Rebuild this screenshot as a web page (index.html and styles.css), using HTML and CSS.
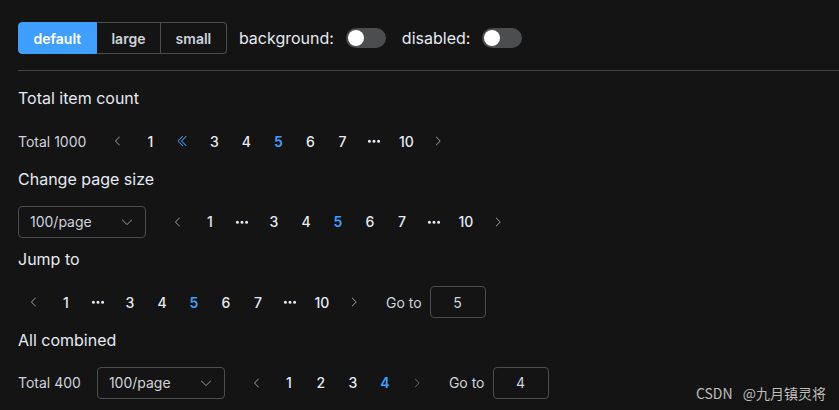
FILE: index.html
```html
<!DOCTYPE html>
<html lang="en">
<head>
<meta charset="utf-8">
<title>Pagination</title>
<link rel="stylesheet" href="styles.css">
</head>
<body>
<div class="page">
  <div class="toolbar">
    <div class="radio-group">
      <span class="radio-btn is-active">default</span>
      <span class="radio-btn">large</span>
      <span class="radio-btn">small</span>
    </div>
    <span class="label">background:</span>
    <span class="switch"><span class="knob"></span></span>
    <span class="label label-gap">disabled:</span>
    <span class="switch"><span class="knob"></span></span>
  </div>
  <div class="divider"></div>

  <div class="block">
    <div class="title">Total item count</div>
    <div class="pagination">
      <span class="total">Total 1000</span>
      <span class="btn"><svg class="ico-arrow" viewBox="0 0 1024 1024"><path fill="currentColor" d="M609.408 149.376 277.76 489.6a32 32 0 0 0 0 44.672l331.648 340.352a29.12 29.12 0 0 0 41.728 0 30.592 30.592 0 0 0 0-42.752L339.264 511.936l311.872-319.872a30.592 30.592 0 0 0 0-42.688 29.12 29.12 0 0 0-41.728 0z"/></svg></span>
      <span class="pg">1</span>
      <span class="pg more is-hover"><svg class="ico-darrow" viewBox="0 0 1024 1024"><path fill="currentColor" d="M529.408 149.376a29.12 29.12 0 0 1 41.728 0 30.592 30.592 0 0 1 0 42.688L259.264 511.936l311.872 319.936a30.592 30.592 0 0 1-.512 43.264 29.12 29.12 0 0 1-41.216-.512L197.76 534.272a32 32 0 0 1 0-44.672l331.648-340.224zm256 0a29.12 29.12 0 0 1 41.728 0 30.592 30.592 0 0 1 0 42.688L515.264 511.936l311.872 319.936a30.592 30.592 0 0 1-.512 43.264 29.120 29.12 0 0 1-41.216-.512L453.760 534.272a32 32 0 0 1 0-44.672l331.648-340.224z"/></svg></span>
      <span class="pg">3</span>
      <span class="pg">4</span>
      <span class="pg is-active">5</span>
      <span class="pg">6</span>
      <span class="pg">7</span>
      <span class="pg more"><svg class="ico-more" viewBox="0 0 1024 1024"><path fill="currentColor" d="M176 416a112 112 0 1 1 0 224 112 112 0 0 1 0-224zm336 0a112 112 0 1 1 0 224 112 112 0 0 1 0-224zm336 0a112 112 0 1 1 0 224 112 112 0 0 1 0-224z"/></svg></span>
      <span class="pg">10</span>
      <span class="btn"><svg class="ico-arrow" viewBox="0 0 1024 1024"><path fill="currentColor" d="M340.864 149.312a30.592 30.592 0 0 0 0 42.752L652.736 512 340.864 831.872a30.592 30.592 0 0 0 0 42.752 29.12 29.12 0 0 0 41.728 0L714.24 534.336a32 32 0 0 0 0-44.672L382.592 149.376a29.12 29.12 0 0 0-41.728 0z"/></svg></span>
    </div>
  </div>

  <div class="block">
    <div class="title">Change page size</div>
    <div class="pagination">
      <span class="select">100/page<svg class="ico-down" viewBox="0 0 1024 1024"><path fill="currentColor" d="M831.872 340.864 512 652.672 192.128 340.864a30.592 30.592 0 0 0-42.752 0 29.12 29.12 0 0 0 0 41.6L489.664 714.24a32 32 0 0 0 44.672 0l340.288-331.712a29.12 29.12 0 0 0 0-41.728 30.592 30.592 0 0 0-42.752 0z"/></svg></span>
      <span class="btn"><svg class="ico-arrow" viewBox="0 0 1024 1024"><path fill="currentColor" d="M609.408 149.376 277.76 489.6a32 32 0 0 0 0 44.672l331.648 340.352a29.12 29.12 0 0 0 41.728 0 30.592 30.592 0 0 0 0-42.752L339.264 511.936l311.872-319.872a30.592 30.592 0 0 0 0-42.688 29.12 29.12 0 0 0-41.728 0z"/></svg></span>
      <span class="pg">1</span>
      <span class="pg more"><svg class="ico-more" viewBox="0 0 1024 1024"><path fill="currentColor" d="M176 416a112 112 0 1 1 0 224 112 112 0 0 1 0-224zm336 0a112 112 0 1 1 0 224 112 112 0 0 1 0-224zm336 0a112 112 0 1 1 0 224 112 112 0 0 1 0-224z"/></svg></span>
      <span class="pg">3</span>
      <span class="pg">4</span>
      <span class="pg is-active">5</span>
      <span class="pg">6</span>
      <span class="pg">7</span>
      <span class="pg more"><svg class="ico-more" viewBox="0 0 1024 1024"><path fill="currentColor" d="M176 416a112 112 0 1 1 0 224 112 112 0 0 1 0-224zm336 0a112 112 0 1 1 0 224 112 112 0 0 1 0-224zm336 0a112 112 0 1 1 0 224 112 112 0 0 1 0-224z"/></svg></span>
      <span class="pg">10</span>
      <span class="btn"><svg class="ico-arrow" viewBox="0 0 1024 1024"><path fill="currentColor" d="M340.864 149.312a30.592 30.592 0 0 0 0 42.752L652.736 512 340.864 831.872a30.592 30.592 0 0 0 0 42.752 29.12 29.12 0 0 0 41.728 0L714.24 534.336a32 32 0 0 0 0-44.672L382.592 149.376a29.12 29.12 0 0 0-41.728 0z"/></svg></span>
    </div>
  </div>

  <div class="block">
    <div class="title">Jump to</div>
    <div class="pagination">
      <span class="btn"><svg class="ico-arrow" viewBox="0 0 1024 1024"><path fill="currentColor" d="M609.408 149.376 277.76 489.6a32 32 0 0 0 0 44.672l331.648 340.352a29.12 29.12 0 0 0 41.728 0 30.592 30.592 0 0 0 0-42.752L339.264 511.936l311.872-319.872a30.592 30.592 0 0 0 0-42.688 29.12 29.12 0 0 0-41.728 0z"/></svg></span>
      <span class="pg">1</span>
      <span class="pg more"><svg class="ico-more" viewBox="0 0 1024 1024"><path fill="currentColor" d="M176 416a112 112 0 1 1 0 224 112 112 0 0 1 0-224zm336 0a112 112 0 1 1 0 224 112 112 0 0 1 0-224zm336 0a112 112 0 1 1 0 224 112 112 0 0 1 0-224z"/></svg></span>
      <span class="pg">3</span>
      <span class="pg">4</span>
      <span class="pg is-active">5</span>
      <span class="pg">6</span>
      <span class="pg">7</span>
      <span class="pg more"><svg class="ico-more" viewBox="0 0 1024 1024"><path fill="currentColor" d="M176 416a112 112 0 1 1 0 224 112 112 0 0 1 0-224zm336 0a112 112 0 1 1 0 224 112 112 0 0 1 0-224zm336 0a112 112 0 1 1 0 224 112 112 0 0 1 0-224z"/></svg></span>
      <span class="pg">10</span>
      <span class="btn"><svg class="ico-arrow" viewBox="0 0 1024 1024"><path fill="currentColor" d="M340.864 149.312a30.592 30.592 0 0 0 0 42.752L652.736 512 340.864 831.872a30.592 30.592 0 0 0 0 42.752 29.12 29.12 0 0 0 41.728 0L714.24 534.336a32 32 0 0 0 0-44.672L382.592 149.376a29.12 29.12 0 0 0-41.728 0z"/></svg></span>
      <span class="jumper">Go to<span class="jump-input">5</span></span>
    </div>
  </div>

  <div class="block">
    <div class="title">All combined</div>
    <div class="pagination">
      <span class="total">Total 400</span>
      <span class="select">100/page<svg class="ico-down" viewBox="0 0 1024 1024"><path fill="currentColor" d="M831.872 340.864 512 652.672 192.128 340.864a30.592 30.592 0 0 0-42.752 0 29.12 29.12 0 0 0 0 41.6L489.664 714.24a32 32 0 0 0 44.672 0l340.288-331.712a29.12 29.12 0 0 0 0-41.728 30.592 30.592 0 0 0-42.752 0z"/></svg></span>
      <span class="btn"><svg class="ico-arrow" viewBox="0 0 1024 1024"><path fill="currentColor" d="M609.408 149.376 277.76 489.6a32 32 0 0 0 0 44.672l331.648 340.352a29.12 29.12 0 0 0 41.728 0 30.592 30.592 0 0 0 0-42.752L339.264 511.936l311.872-319.872a30.592 30.592 0 0 0 0-42.688 29.12 29.12 0 0 0-41.728 0z"/></svg></span>
      <span class="pg">1</span>
      <span class="pg">2</span>
      <span class="pg">3</span>
      <span class="pg is-active">4</span>
      <span class="btn is-disabled"><svg class="ico-arrow" viewBox="0 0 1024 1024"><path fill="currentColor" d="M340.864 149.312a30.592 30.592 0 0 0 0 42.752L652.736 512 340.864 831.872a30.592 30.592 0 0 0 0 42.752 29.12 29.12 0 0 0 41.728 0L714.24 534.336a32 32 0 0 0 0-44.672L382.592 149.376a29.12 29.12 0 0 0-41.728 0z"/></svg></span>
      <span class="jumper">Go to<span class="jump-input">4</span></span>
    </div>
  </div>
</div>
<div class="watermark">CSDN @九月镇灵将</div>
</body>
</html>
```

FILE: styles.css
```css
html, body {
  margin: 0;
  padding: 0;
  background: #141414;
}
body {
  font-family: Inter, "Noto Sans", "Noto Sans CJK SC", sans-serif;
  color: #e5eaf3;
  width: 839px;
  height: 410px;
  overflow: hidden;
  position: relative;
}
.page {
  padding: 22px 0 0 18px;
}
.toolbar {
  display: flex;
  align-items: center;
  height: 32px;
}
.radio-group {
  display: flex;
  margin-right: 12px;
}
.radio-btn {
  box-sizing: border-box;
  height: 32px;
  padding: 0 14.6px;
  display: flex;
  align-items: center;
  font-size: 14px;
  font-weight: 600;
  color: #cfd3dc;
  border: 1px solid #4c4d4f;
  border-left: 0;
}
.radio-btn:first-child {
  border-left: 1px solid #4c4d4f;
  border-radius: 4px 0 0 4px;
}
.radio-btn:last-child {
  border-radius: 0 4px 4px 0;
}
.radio-btn.is-active {
  background: #409eff;
  border-color: #409eff;
  color: #ffffff;
}
.label {
  font-size: 16px;
  color: #e5eaf3;
  margin-right: 12px;
}
.label-gap {
  margin-left: 16px;
}
.switch {
  width: 40px;
  height: 20px;
  border-radius: 10px;
  background: #4c4d4f;
  display: flex;
  align-items: center;
  padding-left: 2px;
  box-sizing: border-box;
}
.knob {
  width: 16px;
  height: 16px;
  border-radius: 50%;
  background: #ffffff;
}
.divider {
  height: 1px;
  background: #414243;
  margin-top: 16px;
  margin-bottom: 15px;
}
.block {
  margin-bottom: 9.6px;
}
.title {
  font-size: 16px;
  line-height: 24px;
  color: #e5eaf3;
  margin-bottom: 15px;
}
.pagination {
  display: flex;
  align-items: center;
  height: 32px;
  font-size: 14px;
}
.total {
  color: #cfd3dc;
  margin-right: 16px;
}
.select {
  box-sizing: border-box;
  width: 128px;
  height: 32px;
  border: 1px solid #4c4d4f;
  border-radius: 4px;
  padding: 0 11px;
  display: flex;
  align-items: center;
  justify-content: space-between;
  color: #cfd3dc;
  margin-right: 16px;
}
.ico-down {
  width: 14px;
  height: 14px;
  color: #8d9095;
}
.btn, .pg {
  min-width: 32px;
  height: 32px;
  display: flex;
  align-items: center;
  justify-content: center;
}
.btn {
  color: #a3a6ad;
}
.btn.is-disabled {
  color: #6c6e72;
}
.pg {
  font-weight: 500;
  color: #e5eaf3;
}
.pg.is-active, .pg.is-hover {
  color: #409eff;
  font-weight: 600;
}
.ico-arrow {
  width: 12px;
  height: 12px;
}
.ico-darrow {
  width: 14px;
  height: 14px;
}
.ico-more {
  width: 14px;
  height: 14px;
}
.jumper {
  display: flex;
  align-items: center;
  margin-left: 16px;
  color: #cfd3dc;
}
.jump-input {
  box-sizing: border-box;
  width: 56px;
  height: 32px;
  margin-left: 8px;
  border: 1px solid #4c4d4f;
  border-radius: 4px;
  display: flex;
  align-items: center;
  justify-content: center;
  color: #cfd3dc;
}
.watermark {
  position: absolute;
  right: 13px;
  top: 383px;
  font-family: "Noto Sans CJK SC", "Noto Sans", sans-serif;
  font-size: 14px;
  word-spacing: 7px;
  color: #bdbdbd;
}
```
